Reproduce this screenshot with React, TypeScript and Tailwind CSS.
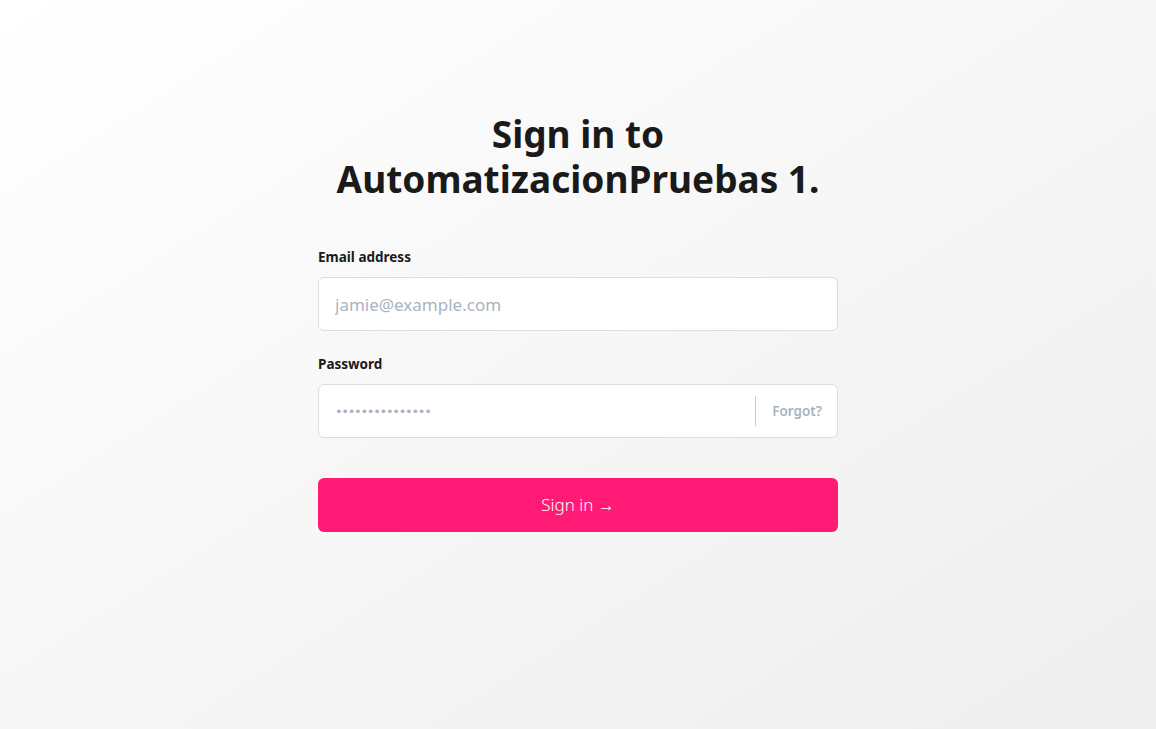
export default function App() {
	return (
		<div
			className="min-h-[729px] w-full bg-gradient-to-br from-[#ffffff] to-[#eeeeee] flex justify-center"
			style={{ fontFamily: '"Noto Sans", "Open Sans", sans-serif' }}
		>
			<div className="w-[520px] pt-[111px]">
				<h1 className="text-center text-[37px] leading-[45px] font-bold text-[#1a1a1a]">
					Sign in to AutomatizacionPruebas 1.
				</h1>

				<form className="mt-[46px]" onSubmit={(e) => e.preventDefault()}>
					<label className="block text-[13.5px] font-bold text-[#1a1a1a] leading-5">Email address</label>
					<input
						type="email"
						placeholder="jamie@example.com"
						className="mt-[10px] w-full h-[54px] rounded-md border border-[#dddddd] bg-white px-4 text-[17px] text-[#333] placeholder:text-[#a9b4c2] outline-none"
					/>

					<label className="mt-[23px] block text-[13.5px] font-bold text-[#1a1a1a] leading-5">Password</label>
					<div className="mt-[10px] flex h-[54px] items-center rounded-md border border-[#dddddd] bg-white">
						<input
							type="password"
							defaultValue="passwordpasswor"
							className="flex-1 h-full bg-transparent px-4 font-['DejaVu_Sans'] text-[13px] tracking-[-1.3px] text-[#aab3bf] outline-none"
						/>
						<div className="h-[30px] w-px bg-[#cccccc]" />
						<a className="pl-4 pr-[15px] text-[13.5px] font-semibold text-[#a9b4c2]">Forgot?</a>
					</div>

					<button
						type="submit"
						className="mt-10 w-full h-[54px] rounded-md bg-[#ff1a75] text-white text-[17px] font-light"
					>
						Sign in →
					</button>
				</form>
			</div>
		</div>
	);
}
